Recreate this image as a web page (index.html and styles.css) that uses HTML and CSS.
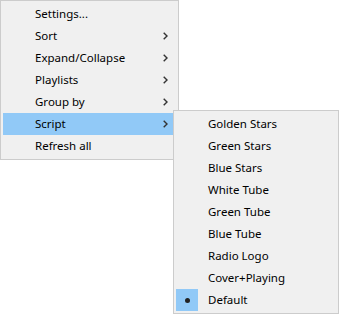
FILE: index.html
```html
<!DOCTYPE html>
<html lang="en">
	<head>
		<meta charset="utf-8">
		<title>Context menu</title>
		<link rel="stylesheet" href="styles.css">
	</head>
	<body>
		<div class="screen">
			<div class="menu main-menu">
				<div class="item"><span class="label">Settings...</span></div>
				<div class="item"><span class="label">Sort</span>
					<svg class="arrow" width="5" height="8" viewBox="0 0 5 8"><polyline points="0.7,0.7 4,4 0.7,7.3"/></svg></div>
				<div class="item"><span class="label">Expand/Collapse</span>
					<svg class="arrow" width="5" height="8" viewBox="0 0 5 8"><polyline points="0.7,0.7 4,4 0.7,7.3"/></svg></div>
				<div class="item"><span class="label">Playlists</span>
					<svg class="arrow" width="5" height="8" viewBox="0 0 5 8"><polyline points="0.7,0.7 4,4 0.7,7.3"/></svg></div>
				<div class="item"><span class="label">Group by</span>
					<svg class="arrow" width="5" height="8" viewBox="0 0 5 8"><polyline points="0.7,0.7 4,4 0.7,7.3"/></svg></div>
				<div class="item active"><span class="label">Script</span>
					<svg class="arrow" width="5" height="8" viewBox="0 0 5 8"><polyline points="0.7,0.7 4,4 0.7,7.3"/></svg></div>
				<div class="item"><span class="label">Refresh all</span></div>
			</div>

			<div class="menu sub-menu">
				<div class="item"><span class="label">Golden Stars</span></div>
				<div class="item"><span class="label">Green Stars</span></div>
				<div class="item"><span class="label">Blue Stars</span></div>
				<div class="item"><span class="label">White Tube</span></div>
				<div class="item"><span class="label">Green Tube</span></div>
				<div class="item"><span class="label">Blue Tube</span></div>
				<div class="item"><span class="label">Radio Logo</span></div>
				<div class="item"><span class="label">Cover+Playing</span></div>
				<div class="item checked"><span class="check"><span class="dot"></span></span><span class="label">Default</span></div>
			</div>
		</div>
	</body>
</html>
```

FILE: styles.css
```css
html, body {
	margin: 0;
	background-color: #ffffff;
}
body {
	font-family: "Noto Sans", "Open Sans", sans-serif;
	font-size: 11.5px;
	color: #000000;
}
.screen {
	position: relative;
	width: 341px;
	height: 314px;
}
.menu {
	box-sizing: border-box;
	background-color: #f0f0f0;
	border: 1px solid #cccccc;
	padding: 2px;
	display: flex;
	flex-direction: column;
}
.main-menu {
	width: 179px;
}
.sub-menu {
	position: absolute;
	top: 110px;
	left: 173px;
	width: 166px;
}
.item {
	position: relative;
	display: flex;
	align-items: center;
	flex: none;
	height: 22px;
	padding-left: 32px;
}
.item.active {
	background-color: #91c9f7;
}
.label {
	flex: 1;
	line-height: 22px;
	white-space: nowrap;
}
.arrow {
	margin-right: 8px;
	fill: none;
	stroke: #333333;
	stroke-width: 1.4;
}
.check {
	position: absolute;
	left: 0;
	top: 0;
	width: 22px;
	height: 22px;
	background-color: #91c9f7;
	display: flex;
	align-items: center;
	justify-content: center;
}
.dot {
	width: 5px;
	height: 5px;
	border-radius: 50%;
	background-color: #222222;
}
```
